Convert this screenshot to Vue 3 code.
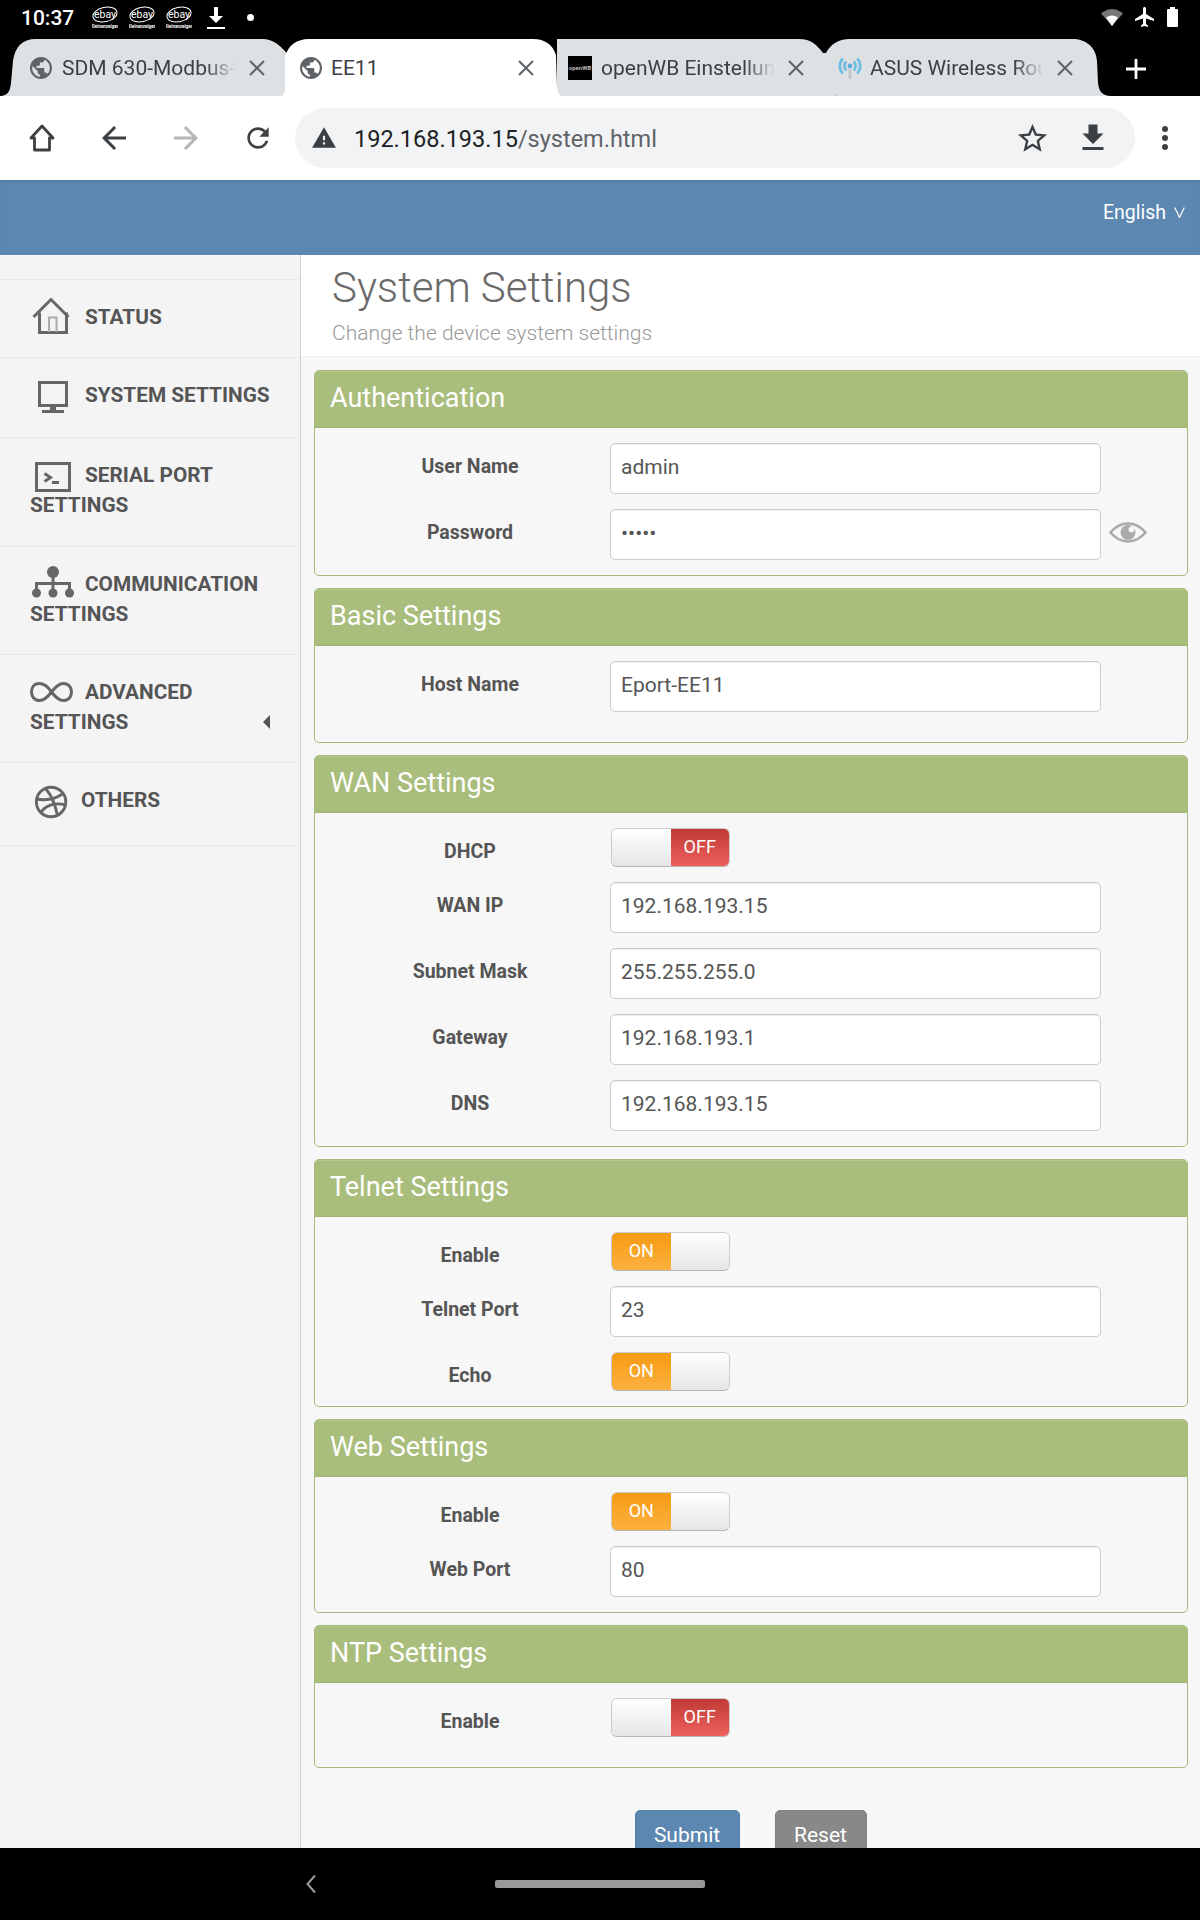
<script setup>
const tabs = [
  { id: 't1', title: 'SDM 630-Modbus-TCP', fav: 'globe' },
  { id: 't2', title: 'EE11', fav: 'globe' },
  { id: 't3', title: 'openWB Einstellungen', fav: 'wb' },
  { id: 't4', title: 'ASUS Wireless Router', fav: 'asus' }
]
const navItems = [
  { id: 'status', cls: 'n1', l1: 'STATUS' },
  { id: 'system', cls: 'n2', l1: 'SYSTEM SETTINGS' },
  { id: 'serial', cls: 'n3', l1: 'SERIAL PORT', l2: 'SETTINGS' },
  { id: 'comm', cls: 'n4', l1: 'COMMUNICATION', l2: 'SETTINGS' },
  { id: 'adv', cls: 'n5', l1: 'ADVANCED', l2: 'SETTINGS', arrow: true },
  { id: 'others', cls: 'n6', l1: 'OTHERS' }
]
const panels = [
  { title: 'Authentication', rows: [
    { label: 'User Name', value: 'admin' },
    { label: 'Password', value: 'admin', password: true }
  ] },
  { title: 'Basic Settings', tall: true, rows: [
    { label: 'Host Name', value: 'Eport-EE11' }
  ] },
  { title: 'WAN Settings', rows: [
    { label: 'DHCP', toggle: 'off' },
    { label: 'WAN IP', value: '192.168.193.15' },
    { label: 'Subnet Mask', value: '255.255.255.0' },
    { label: 'Gateway', value: '192.168.193.1' },
    { label: 'DNS', value: '192.168.193.15' }
  ] },
  { title: 'Telnet Settings', rows: [
    { label: 'Enable', toggle: 'on' },
    { label: 'Telnet Port', value: '23' },
    { label: 'Echo', toggle: 'on' }
  ] },
  { title: 'Web Settings', rows: [
    { label: 'Enable', toggle: 'on' },
    { label: 'Web Port', value: '80' }
  ] },
  { title: 'NTP Settings', tall: true, rows: [
    { label: 'Enable', toggle: 'off' }
  ] }
]
</script>

<template>
  <div class="screen">
    <div class="status">
      <span class="time">10:37</span>
      <svg v-for="n in 3" :key="n" class="ebay" viewBox="0 0 26 24">
        <ellipse cx="13" cy="8.500" rx="12.200" ry="7.200" transform="rotate(-12 13 8.500)" fill="none" stroke="#fff" stroke-width="1" />
        <text x="13" y="12" text-anchor="middle" font-size="10.500" fill="#fff" font-family="Roboto, sans-serif">ebay</text>
        <text x="13" y="22" text-anchor="middle" font-size="4.500" font-weight="700" fill="#fff" font-family="Roboto, sans-serif">Kleinanzeigen</text>
      </svg>
      <svg class="dl" viewBox="0 0 18 24">
        <path d="M7 1h4v9h5l-7 7-7-7h5z" fill="#fff" />
        <rect x="0" y="21" width="18" height="2" fill="#fff" />
      </svg>
      <span class="dot"></span>
      <div class="status-right">
        <svg width="22" height="18" viewBox="0 0 22 18">
          <path d="M0 5.500Q11 -3.500 22 5.500L11 18Z" fill="#777" />
          <path d="M5 9.500Q11 5.500 17 9.500L11 18Z" fill="#fff" />
        </svg>
        <svg width="24" height="24" viewBox="0 0 24 24">
          <path fill="#fff" d="M21 16v-2l-8-5V3.500c0-.83-.67-1.500-1.500-1.500S10 2.670 10 3.500V9l-8 5v2l8-2.500V19l-2 1.500V22l3.500-1 3.500 1v-1.500L13 19v-5.500l8 2.500z" />
        </svg>
        <svg width="11" height="20" viewBox="0 0 11 20">
          <path fill="#fff" d="M3 0h5v2h2a1 1 0 0 1 1 1v16a1 1 0 0 1-1 1H1a1 1 0 0 1-1-1V3a1 1 0 0 1 1-1h2z" />
        </svg>
      </div>
    </div>

    <div class="tabstrip">
      <div v-for="t in tabs" :key="t.id" class="tab" :class="t.id">
        <svg v-if="t.fav === 'globe'" class="fav fav-globe" viewBox="2 2 20 20">
          <path fill="#5f6368" d="M12 2C6.480 2 2 6.480 2 12s4.480 10 10 10 10-4.480 10-10S17.520 2 12 2zm-1 17.930c-3.950-.49-7-3.850-7-7.930 0-.62.08-1.210.21-1.790L9 15v1c0 1.100.9 2 2 2v1.930zm6.900-2.540c-.26-.81-1-1.390-1.900-1.390h-1v-3c0-.55-.45-1-1-1H8v-2h2c.55 0 1-.45 1-1V7h2c1.100 0 2-.9 2-2v-.41c2.930 1.190 5 4.060 5 7.410 0 2.080-.8 3.970-2.100 5.390z" />
        </svg>
        <svg v-else-if="t.fav === 'wb'" class="fav" viewBox="0 0 24 24">
          <rect width="24" height="24" fill="#000" />
          <text x="12" y="14" text-anchor="middle" font-size="6" font-weight="700" fill="#bbb" font-family="Roboto, sans-serif">openWB</text>
        </svg>
        <svg v-else class="fav" viewBox="0 0 24 24">
          <path d="M12 13v10" stroke="#c4c8cb" stroke-width="3" />
          <circle cx="12" cy="10" r="2.400" fill="#5aaedb" />
          <path d="M8.300 5.500a6.500 6.500 0 0 0 0 9M15.700 5.500a6.500 6.500 0 0 1 0 9M4.800 2.500a11 11 0 0 0 0 15M19.200 2.500a11 11 0 0 1 0 15" fill="none" stroke="#6fbde3" stroke-width="2.800" />
        </svg>
        <span class="tab-title">{{ t.title }}</span>
        <svg class="close" viewBox="0 0 24 24">
          <path d="M5 5l14 14M19 5L5 19" stroke="#5f6368" stroke-width="2" fill="none" />
        </svg>
      </div>
      <svg class="plus" viewBox="0 0 22 22">
        <path d="M11 1v20M1 11h20" stroke="#fff" stroke-width="2.800" />
      </svg>
    </div>

    <div class="toolbar">
      <div class="tool">
        <svg width="28" height="30" viewBox="0 0 28 30">
          <path d="M14 3L3 15H6.500V27H21.500V15H25Z" fill="none" stroke="#3c4043" stroke-width="2.800" stroke-linejoin="round" />
        </svg>
      </div>
      <div class="tool">
        <svg width="36" height="36" viewBox="0 0 24 24">
          <path fill="#3c4043" d="M20 11H7.830l5.590-5.590L12 4l-8 8 8 8 1.410-1.410L7.830 13H20v-2z" />
        </svg>
      </div>
      <div class="tool">
        <svg width="36" height="36" viewBox="0 0 24 24">
          <path fill="#b4b6b9" d="M4 11h12.170l-5.590-5.590L12 4l8 8-8 8-1.410-1.410L16.170 13H4v-2z" />
        </svg>
      </div>
      <div class="tool">
        <svg width="32" height="32" viewBox="0 0 24 24">
          <path fill="#3c4043" d="M17.650 6.350A7.958 7.958 0 0 0 12 4c-4.420 0-7.990 3.580-7.990 8s3.570 8 7.990 8c3.730 0 6.840-2.550 7.730-6h-2.080A5.990 5.990 0 0 1 12 18c-3.310 0-6-2.690-6-6s2.690-6 6-6c1.660 0 3.140.69 4.220 1.780L13 11h7V4l-2.350 2.350z" />
        </svg>
      </div>
      <div class="omnibox">
        <svg class="warn" width="26" height="26" viewBox="0 0 24 24">
          <path fill="#3c4043" d="M1 21h22L12 2 1 21zm12-3h-2v-2h2v2zm0-4h-2v-4h2v4z" />
        </svg>
        <span class="url"><span class="host">192.168.193.15</span>/system.html</span>
        <svg class="star" width="35" height="35" viewBox="0 0 24 24">
          <path fill="#3c4043" d="M22 9.240l-7.190-.62L12 2 9.190 8.630 2 9.240l5.460 4.730L5.820 21 12 17.270 18.180 21l-1.630-7.030L22 9.240zM12 15.400l-3.760 2.270 1-4.280-3.320-2.880 4.380-.38L12 6.100l1.710 4.040 4.380.38-3.320 2.880 1 4.280L12 15.400z" />
        </svg>
        <svg class="save" width="36" height="36" viewBox="0 0 24 24">
          <path fill="#3c4043" d="M19 9h-4V3H9v6H5l7 7 7-7zM5 18v2h14v-2H5z" />
        </svg>
      </div>
      <div class="menu"><i></i><i></i><i></i></div>
    </div>

    <div class="topbar">
      <span class="lang">English</span>
      <svg width="11" height="11" viewBox="0 0 11 11">
        <path d="M.7 .5L5.500 10.500L10.300 .5" fill="none" stroke="#fff" stroke-width="1.200" />
      </svg>
    </div>

    <div class="content">
      <aside class="side">
        <div v-for="it in navItems" :key="it.id" class="item" :class="it.cls">
          <svg v-if="it.id === 'status'" class="ico" viewBox="0 0 55 40">
            <path d="M3.500 20L21 2.500L38.500 20" class="st" />
            <path d="M9.500 15.500V35.500H36.500V15.500" class="st" />
            <path d="M19 35V20.500H26.500V35" fill="none" stroke="#aaa" stroke-width="2" />
          </svg>
          <svg v-else-if="it.id === 'system'" class="ico" viewBox="0 0 55 40">
            <rect x="9.500" y="7.500" width="27" height="23" class="st" />
            <rect x="20" y="32" width="6" height="3" class="fl" />
            <rect x="12" y="35" width="22" height="3" class="fl" />
          </svg>
          <svg v-else-if="it.id === 'serial'" class="ico" viewBox="0 0 55 40">
            <rect x="6.500" y="8.500" width="33" height="27" class="st" />
            <path d="M14.500 18.500L20.500 22.500L14.500 26.500" class="st" />
            <path d="M22 27.500H29" class="st" stroke-width="2.500" />
          </svg>
          <svg v-else-if="it.id === 'comm'" class="ico" viewBox="0 0 55 40">
            <circle cx="23" cy="8" r="6" class="fl" />
            <path d="M6.500 29V19.500H39.500V29M23 12V29" class="st" />
            <circle cx="6.500" cy="29" r="4.500" class="fl" />
            <circle cx="23" cy="29" r="4.500" class="fl" />
            <circle cx="39.500" cy="29" r="4.500" class="fl" />
          </svg>
          <svg v-else-if="it.id === 'adv'" class="ico" viewBox="0 0 55 40">
            <path d="M21.500 20C17 13 12 11.500 9 11.500C4 11.500 1.500 15.500 1.500 20C1.500 24.500 4.500 28.500 9.500 28.500C13 28.500 17 26 21.500 20C26 14 30 11.500 33.500 11.500C38.500 11.500 41.500 15.500 41.500 20C41.500 24.500 38.500 28.500 33.500 28.500C30 28.500 26 26 21.500 20Z" class="st" />
          </svg>
          <svg v-else class="ico ico-short" viewBox="0 0 52 40">
            <circle cx="21.500" cy="22" r="15" class="st" />
            <path d="M16 8.500C22 15 26 26 28 35.500M7 19C15 21 27 19 34 13M11 33C15 26 25 22 36 25" class="st" stroke-width="2.400" />
          </svg>
          <span>{{ it.l1 }}</span><template v-if="it.l2"><br />{{ it.l2 }}</template>
          <i v-if="it.arrow" class="caret"></i>
        </div>
      </aside>

      <main class="main">
        <div class="pagehead">
          <div class="pagetitle">System Settings</div>
          <div class="pagesub">Change the device system settings</div>
        </div>

        <section v-for="p in panels" :key="p.title" class="panel" :class="{ tall: p.tall }">
          <div class="panel-head">{{ p.title }}</div>
          <div class="panel-body">
            <div v-for="r in p.rows" :key="r.label" class="row">
              <label class="lab">{{ r.label }}</label>
              <div v-if="r.toggle" class="toggle" :class="r.toggle">
                <span v-if="r.toggle === 'on'" class="seg seg-on">ON</span>
                <span class="seg seg-blank"></span>
                <span v-if="r.toggle === 'off'" class="seg seg-off">OFF</span>
              </div>
              <input v-else class="field" :type="r.password ? 'password' : 'text'" :value="r.value" readonly />
              <svg v-if="r.password" class="eye" viewBox="0 0 38 21">
                <path d="M1.500 10.500C7 4 13 1.500 19 1.500S31 4 36.500 10.500C31 17 25 19.500 19 19.500S7 17 1.500 10.500Z" fill="none" stroke="#aaa" stroke-width="2.500" />
                <circle cx="19" cy="10.500" r="7.500" fill="#aaa" />
                <circle cx="22.500" cy="7.500" r="3" fill="#f7f7f7" />
              </svg>
            </div>
          </div>
        </section>

        <div class="actions">
          <button class="btn submit">Submit</button>
          <button class="btn reset">Reset</button>
        </div>
      </main>
    </div>

    <div class="navbar">
      <svg width="12" height="20" viewBox="0 0 12 20">
        <path d="M10 1.500L2.500 10L10 18.500" fill="none" stroke="#999" stroke-width="2" />
      </svg>
      <span class="pill"></span>
    </div>
  </div>
</template>

<style scoped>
.screen {
  width: 1200px;
  height: 1920px;
  display: flex;
  flex-direction: column;
  overflow: hidden;
  font-family: Roboto, "Liberation Sans", sans-serif;
  background: #000;
}

/* status bar */
.status {
  height: 39px;
  flex: none;
  display: flex;
  align-items: flex-start;
  padding: 0 22px 0 21px;
  color: #fff;
}
.time {
  width: 71px;
  font-size: 21px;
  font-weight: 500;
  line-height: 37px;
}
.ebay {
  width: 26px;
  height: 24px;
  margin: 6px 11px 0 0;
}
.dl {
  width: 18px;
  height: 24px;
  margin: 6px 0 0 4px;
}
.dot {
  width: 7px;
  height: 7px;
  border-radius: 50%;
  background: #fff;
  margin: 14px 0 0 22px;
}
.status-right {
  margin-left: auto;
  display: flex;
  gap: 10px;
  align-items: center;
  height: 34px;
}

/* tabs */
.tabstrip {
  height: 57px;
  flex: none;
  display: flex;
  align-items: stretch;
}
.tab {
  position: relative;
  display: flex;
  align-items: center;
  height: 57px;
  flex: none;
  background: #dee1e4;
  font-size: 21px;
  color: #3c4043;
  box-sizing: border-box;
}
.t1 {
  width: 292px;
  padding-left: 29px;
  padding-right: 23px;
  clip-path: path('M0 57C8 57 10 52 11 44L13 22C15 8 22 0 36 0L262 0C274 0 280 6 292 20L292 57Z');
}
.t2 {
  width: 281px;
  margin-left: -11px;
  padding-left: 18px;
  padding-right: 24px;
  background: #fff;
  z-index: 2;
  clip-path: path('M0 57C3 57 4 53 4 47L4 18C7 6 16 0 28 0L252 0C264 0 272 6 275 16L276 48Q277 57 281 57Z');
}
.t2 .tab-title {
  margin-left: -1px;
}
.t3 {
  width: 279px;
  margin-left: -5px;
  padding-left: 11px;
  padding-right: 28px;
  z-index: 1;
  clip-path: path('M0 0L242 0C254 0 260 6 266 14L279 14L279 57L0 57Z');
}
.t4 {
  width: 285px;
  margin-left: -10px;
  padding-left: 12px;
  padding-right: 34px;
  z-index: 1;
  clip-path: path('M0 14C4 6 12 0 24 0L246 0C260 0 270 8 271 22L272 44C273 52 276 57 285 57L12 57C6 57 4 52 4 46Z');
}
.t4 .tab-title {
  margin-left: -1px;
}
.fav {
  width: 24px;
  height: 24px;
  flex: none;
  margin-right: 9px;
}
.fav-globe {
  width: 22px;
  height: 22px;
  margin: 0 10px 0 1px;
}
.tab-title {
  flex: 1;
  min-width: 0;
  overflow: hidden;
  white-space: nowrap;
  -webkit-mask-image: linear-gradient(to right, #000 calc(100% - 30px), transparent);
  mask-image: linear-gradient(to right, #000 calc(100% - 30px), transparent);
}
.t2 .tab-title {
  -webkit-mask-image: none;
  mask-image: none;
}
.close {
  width: 24px;
  height: 24px;
  flex: none;
  margin-left: 9px;
}
.plus {
  width: 22px;
  height: 22px;
  margin: 19px 0 0 14px;
}

/* toolbar */
.toolbar {
  height: 84px;
  flex: none;
  background: #fff;
  display: flex;
  align-items: center;
  padding-left: 6px;
}
.tool {
  width: 72px;
  height: 60px;
  flex: none;
  display: flex;
  align-items: center;
  justify-content: center;
}
.omnibox {
  margin-left: 1px;
  width: 840px;
  height: 60px;
  flex: none;
  border-radius: 30px;
  background: #f1f3f4;
  display: flex;
  align-items: center;
  padding-left: 16px;
  box-sizing: border-box;
}
.warn {
  flex: none;
}
.url {
  margin-left: 17px;
  padding-top: 2px;
  font-size: 23.500px;
  color: #5f6368;
  flex: 1;
}
.host {
  color: #202124;
}
.star {
  margin-right: 25px;
}
.save {
  margin-right: 24px;
}
.menu {
  width: 60px;
  display: flex;
  flex-direction: column;
  align-items: center;
  gap: 3px;
}
.menu i {
  width: 6px;
  height: 6px;
  border-radius: 50%;
  background: #3c4043;
}

/* blue header */
.topbar {
  height: 75px;
  flex: none;
  background: #5c87b0;
  box-shadow: inset 0 2px 2px -1px rgba(0, 0, 0, 0.15);
  display: flex;
  justify-content: flex-end;
  align-items: center;
  padding: 0 15px 10px 0;
  box-sizing: border-box;
  color: #fff;
}
.lang {
  font-size: 19.500px;
  margin-right: 8px;
}

/* content */
.content {
  flex: 1;
  min-height: 0;
  display: flex;
  background: #f7f7f7;
  overflow: hidden;
}
.side {
  width: 301px;
  flex: none;
  box-sizing: border-box;
  border-right: 1px solid #cfcfcf;
  background: #f4f4f5;
  padding-top: 24px;
}
.item {
  position: relative;
  padding: 22px 0 26px 30px;
  border-bottom: 1px solid #e9e9e9;
  font-size: 20.800px;
  font-weight: 700;
  line-height: 30px;
  color: #555;
  white-space: nowrap;
}
.n1 {
  padding-top: 22px;
  padding-bottom: 25px;
  border-top: 1px solid #e9e9e9;
}
.n2 {
  padding-bottom: 27px;
}
.n4,
.n5 {
  padding-top: 22px;
  padding-bottom: 25px;
}
.n6 {
  padding-bottom: 30px;
}
.ico {
  width: 55px;
  height: 40px;
  margin: -5px 0;
  vertical-align: top;
}
.ico-short {
  width: 51px;
}
.st {
  fill: none;
  stroke: #666;
  stroke-width: 3;
}
.fl {
  fill: #666;
}
.caret {
  position: absolute;
  right: 30px;
  bottom: 33px;
  width: 0;
  height: 0;
  border-style: solid;
  border-width: 7px 7px 7px 0;
  border-color: transparent #555 transparent transparent;
}

/* main column */
.main {
  flex: 1;
  min-width: 0;
}
.pagehead {
  height: 102px;
  box-sizing: border-box;
  background: #fff;
  border-bottom: 1px solid #f0f0f0;
  padding: 8px 0 0 31px;
  margin-bottom: 13px;
}
.pagetitle {
  font-size: 42px;
  font-weight: 300;
  line-height: 50px;
  color: #6a6a6a;
}
.pagesub {
  font-size: 21px;
  font-weight: 300;
  line-height: 26px;
  margin-top: 7px;
  color: #999;
}
.panel {
  margin: 0 12px 12px 13px;
  border: 1px solid #a6b97a;
  border-radius: 5px;
  overflow: hidden;
  background: #f7f7f7;
}
.panel-head {
  height: 57px;
  box-sizing: border-box;
  background: #a9bd7c;
  border-top: 1px solid #b7c88f;
  border-bottom: 1px solid #9fb372;
  color: #fff;
  font-size: 27px;
  line-height: 52px;
  padding-left: 15px;
}
.panel-body {
  padding: 15px 15px 15px;
  display: flex;
  flex-direction: column;
  gap: 15px;
}
.tall .panel-body {
  padding-bottom: 30px;
}
.row {
  display: flex;
  align-items: flex-start;
}
.lab {
  width: 280px;
  flex: none;
  text-align: center;
  font-size: 19.500px;
  font-weight: 700;
  line-height: 26px;
  padding-top: 11px;
  color: #555;
}
.field {
  width: 491px;
  height: 51px;
  box-sizing: border-box;
  border: 1px solid #ccc;
  border-radius: 5px;
  background: #fff;
  box-shadow: inset 0 1px 1px rgba(0, 0, 0, 0.075);
  padding: 0 10px 3px;
  font-family: Roboto, "Liberation Sans", sans-serif;
  font-size: 21px;
  color: #555;
  outline: none;
}
.eye {
  width: 38px;
  height: 21px;
  margin: 13px 0 0 8px;
  flex: none;
}
.toggle {
  width: 119px;
  height: 39px;
  margin-left: 1px;
  box-sizing: border-box;
  border: 1px solid #ccc;
  border-bottom-color: #b5b5b5;
  border-radius: 6px;
  overflow: hidden;
  display: flex;
  font-size: 18px;
  color: #fff;
}
.seg {
  flex: 1;
  display: flex;
  align-items: center;
  justify-content: center;
  padding-bottom: 2px;
}
.seg-blank {
  background: linear-gradient(#ffffff, #e6e6e6);
}
.seg-on {
  background: linear-gradient(#f59a13, #fdb13f);
}
.seg-off {
  background: linear-gradient(#c03a34, #ed605d);
}

.actions {
  display: flex;
  justify-content: center;
  gap: 35px;
  margin-top: 42px;
  padding-right: 0;
}
.btn {
  height: 50px;
  border-radius: 5px;
  border: 1px solid transparent;
  font-family: Roboto, "Liberation Sans", sans-serif;
  font-size: 21px;
  color: #fff;
  padding: 0;
}
.submit {
  width: 105px;
  background: #5c87b0;
  border-color: #5580a8;
}
.reset {
  width: 92px;
  background: #888;
  border-color: #808080;
}

/* bottom nav */
.navbar {
  height: 72px;
  flex: none;
  background: #000;
  display: flex;
  align-items: center;
  padding-left: 305px;
}
.pill {
  width: 210px;
  height: 8px;
  border-radius: 2px;
  background: #999;
  margin-left: 178px;
}
</style>
